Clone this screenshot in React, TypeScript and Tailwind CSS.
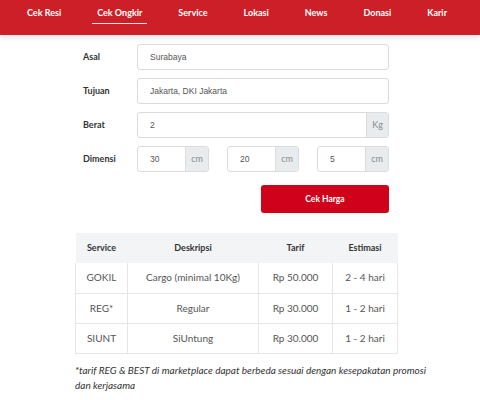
import React from 'react';

const nav = ['Cek Resi', 'Cek Ongkir', 'Service', 'Lokasi', 'News', 'Donasi', 'Karir'];

const rows = [
  { svc: 'GOKIL', desc: 'Cargo (minimal 10Kg)', tarif: 'Rp 50.000', est: '2 - 4 hari' },
  { svc: 'REG*', desc: 'Regular', tarif: 'Rp 30.000', est: '1 - 2 hari' },
  { svc: 'SIUNT', desc: 'SiUntung', tarif: 'Rp 30.000', est: '1 - 2 hari' },
];

function Field({ label, children }: { label: string; children: React.ReactNode }) {
  return (
    <div className="flex items-center h-[26px]">
      <span className="w-[54px] text-[9px] font-bold text-[#333]">{label}</span>
      <div className="flex-1 flex gap-[18px]">{children}</div>
    </div>
  );
}

function Input({ value, addon }: { value: string; addon?: string }) {
  return (
    <div className="flex-1 flex h-[26px] border border-[#dcdcdc] rounded-[3px] bg-white overflow-hidden">
      <span className="flex-1 pl-[12px] flex items-center text-[8.5px] text-[#555] font-['Liberation_Sans',sans-serif]">
        {value}
      </span>
      {addon && (
        <span className="px-[5px] min-w-[20px] flex items-center justify-center bg-[#e9ecef] border-l border-[#dcdcdc] text-[9px] text-[#8a8a8a]">
          {addon}
        </span>
      )}
    </div>
  );
}

export default function App() {
  return (
    <div className="w-[480px] h-[400px] bg-white overflow-hidden font-['Lato',sans-serif]">
      <header className="h-[35px] bg-[#cc1f27] shadow-[0_2px_6px_rgba(0,0,0,0.12)] flex items-start pt-[6px] pl-[27px] gap-[36px]">
        {nav.map((n) => (
          <span key={n} className="relative text-[9px] font-bold text-white">
            {n}
            {n === 'Cek Ongkir' && (
              <span className="absolute -left-[5px] -right-[5px] top-[17px] h-px bg-white/90" />
            )}
          </span>
        ))}
      </header>

      <main className="pl-[83px] pr-[91px] pt-[9px] flex flex-col gap-[8px]">
        <Field label="Asal">
          <Input value="Surabaya" />
        </Field>
        <Field label="Tujuan">
          <Input value="Jakarta, DKI Jakarta" />
        </Field>
        <Field label="Berat">
          <Input value="2" addon="Kg" />
        </Field>
        <Field label="Dimensi">
          <Input value="30" addon="cm" />
          <Input value="20" addon="cm" />
          <Input value="5" addon="cm" />
        </Field>
        <div className="flex justify-end mt-[5px]">
          <button className="w-[128px] h-[28px] rounded-[3px] bg-[#d0021b] text-white text-[8.5px] font-bold">
            Cek Harga
          </button>
        </div>
      </main>

      <div className="ml-[75px] mt-[20px]">
        <table className="w-[323px] border-collapse text-[10px] text-[#555] text-center">
          <thead>
            <tr className="bg-[#f3f4f6] h-[30px] text-[9px] text-[#333]">
              <th className="w-[52px] font-bold">Service</th>
              <th className="w-[131px] font-bold">Deskripsi</th>
              <th className="w-[74px] font-bold">Tarif</th>
              <th className="font-bold">Estimasi</th>
            </tr>
          </thead>
          <tbody>
            {rows.map((r) => (
              <tr key={r.svc} className="h-[30px] border-b border-[#e6e6e6]">
                <td className="border-l border-r border-[#e6e6e6]">{r.svc}</td>
                <td className="border-r border-[#e6e6e6]">{r.desc}</td>
                <td className="border-r border-[#e6e6e6]">{r.tarif}</td>
                <td className="border-r border-[#e6e6e6]">{r.est}</td>
              </tr>
            ))}
          </tbody>
        </table>
        <p className="w-[365px] mt-[9px] text-[10px] italic text-[#333] leading-[15px]">
          *tarif REG &amp; BEST di marketplace dapat berbeda sesuai dengan kesepakatan promosi dan kerjasama
        </p>
      </div>
    </div>
  );
}
